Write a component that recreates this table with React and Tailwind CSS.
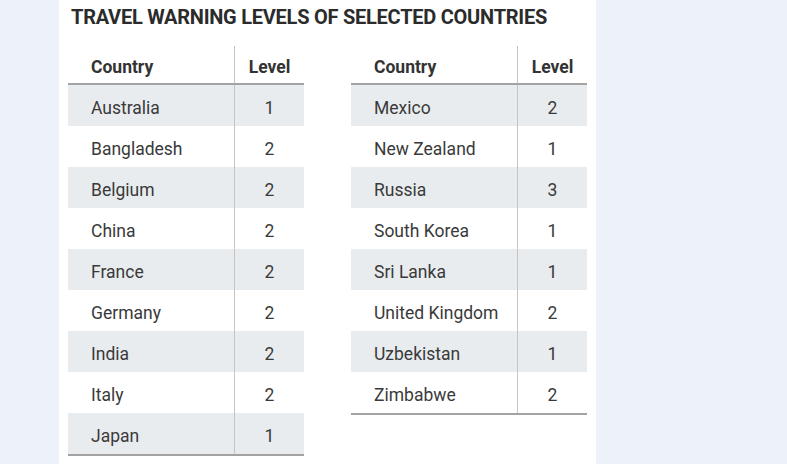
import React from "react";

const left = [
  ["Australia", "1"],
  ["Bangladesh", "2"],
  ["Belgium", "2"],
  ["China", "2"],
  ["France", "2"],
  ["Germany", "2"],
  ["India", "2"],
  ["Italy", "2"],
  ["Japan", "1"],
];
const right = [
  ["Mexico", "2"],
  ["New Zealand", "1"],
  ["Russia", "3"],
  ["South Korea", "1"],
  ["Sri Lanka", "1"],
  ["United Kingdom", "2"],
  ["Uzbekistan", "1"],
  ["Zimbabwe", "2"],
];

function Table({ rows }) {
  return (
    <div className="w-[236px] flex flex-col">
      <div className="flex h-[39px] border-b-2 border-[#a3a3a3] text-[17.5px] font-bold text-[#333]">
        <div className="w-[167px] border-r border-[#c4c4c4] pl-[23px] pt-[6px] flex items-center">Country</div>
        <div className="flex-1 flex items-center justify-center pt-[6px]">Level</div>
      </div>
      <div className="flex flex-col border-b-2 border-[#a3a3a3]">
        {rows.map(([c, l], i) => (
          <div
            key={c}
            className={
              "flex h-[41px] text-[17.5px] text-[#3a3a3a] " +
              (i % 2 === 0 ? "bg-[#e9ecee]" : "bg-white")
            }
          >
            <div className="w-[167px] border-r border-[#c4c4c4] pl-[23px] pt-[5px] flex items-center">{c}</div>
            <div className="flex-1 flex items-center justify-center pt-[5px]">{l}</div>
          </div>
        ))}
      </div>
    </div>
  );
}

export default function App() {
  return (
    <div
      className="w-[787px] h-[464px] bg-[#edf1f9] flex overflow-hidden"
      style={{ fontFamily: "Roboto, 'Liberation Sans', sans-serif" }}
    >
      <div className="ml-[59px] w-[537px] h-full bg-white px-[9px] flex flex-col">
        <div className="pl-[3px] pt-[5px] h-[46px] text-[20px] font-bold text-[#2b2b2b] tracking-[-0.25px] leading-[24px]">
          TRAVEL WARNING LEVELS OF SELECTED COUNTRIES
        </div>
        <div className="flex gap-[47px] items-start">
          <Table rows={left} />
          <Table rows={right} />
        </div>
      </div>
    </div>
  );
}
